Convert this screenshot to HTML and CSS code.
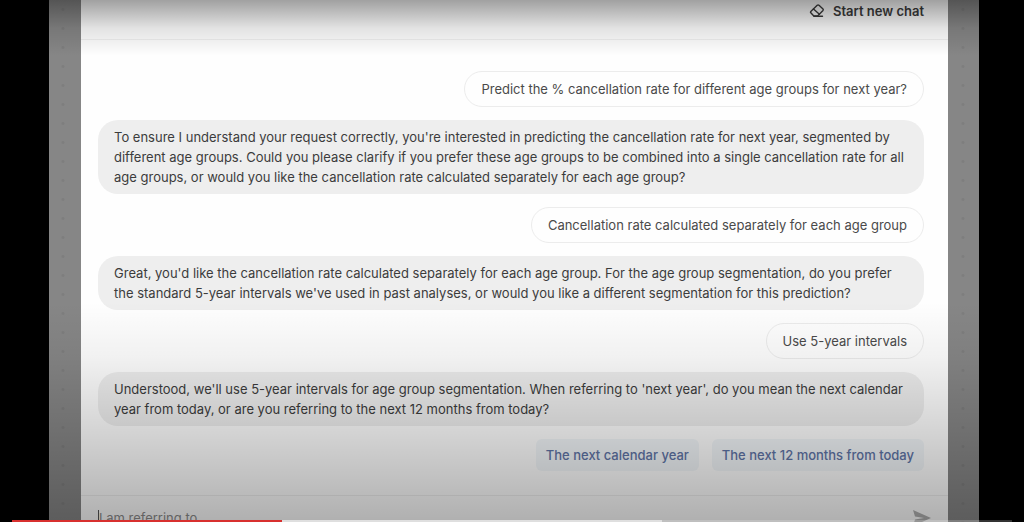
FILE: index.html
```html
<!DOCTYPE html>
<html lang="en">
<head>
    <meta charset="UTF-8">
    <meta name="viewport" content="width=device-width, initial-scale=1.0">
    <title>Chat</title>
    <link rel="stylesheet" href="styles.css">
</head>
<body>
    <div class="player">
        <div class="backdrop">
            <main class="chat">
                <header class="chat-header">
                    <button class="new-chat" type="button">
                        <svg width="16" height="16" viewBox="0 0 16 16" fill="none" stroke="currentColor" stroke-width="1.4" stroke-linejoin="round" stroke-linecap="round">
                            <path d="M8.2 2.3 L1.8 8.4 Q1.1 9.1 1.8 9.8 L4.8 13 H8.6 L14 7.4 Q14.6 6.7 14 6 L10 2.3 Q9.1 1.6 8.2 2.3 Z"/>
                            <path d="M4.5 6 L10.4 11.2 M5 13.3 H13.5"/>
                        </svg>
                        Start new chat
                    </button>
                </header>

                <div class="messages">
                    <p class="message user">Predict the % cancellation rate for different age groups for next year?</p>
                    <p class="message bot">To ensure I understand your request correctly, you're interested in predicting the cancellation rate for next year, segmented by different age groups. Could you please clarify if you prefer these age groups to be combined into a single cancellation rate for all age groups, or would you like the cancellation rate calculated separately for each age group?</p>
                    <p class="message user">Cancellation rate calculated separately for each age group</p>
                    <p class="message bot">Great, you'd like the cancellation rate calculated separately for each age group. For the age group segmentation, do you prefer the standard 5-year intervals we've used in past analyses, or would you like a different segmentation for this prediction?</p>
                    <p class="message user">Use 5-year intervals</p>
                    <p class="message bot">Understood, we'll use 5-year intervals for age group segmentation. When referring to 'next year', do you mean the next calendar year from today, or are you referring to the next 12 months from today?</p>
                    <div class="suggestions">
                        <button type="button">The next calendar year</button>
                        <button type="button">The next 12 months from today</button>
                    </div>
                </div>

                <form class="composer">
                    <input type="text" aria-label="Message" placeholder="I am referring to">
                    <button type="button" aria-label="Send">
                        <svg width="18" height="16" viewBox="0 0 18 16" fill="currentColor">
                            <path d="M0 0 L18 8 L0 16 L2 9.5 L11 8 L2 6.5 Z"/>
                        </svg>
                    </button>
                </form>
            </main>
        </div>
        <div class="shade shade-top"></div>
        <div class="shade shade-bottom"></div>
        <div class="progress">
            <div class="played"></div>
            <div class="loaded"></div>
        </div>
    </div>
</body>
</html>
```

FILE: styles.css
```css
* {
    box-sizing: border-box;
}

body {
    margin: 0;
    background: #000;
    color: #3c3c3c;
    font-family: Inter, "Liberation Sans", sans-serif;
    font-size: 13px;
    line-height: 20px;
}

button, input {
    font: inherit;
    border: none;
    background: none;
    padding: 0;
}

button {
    cursor: pointer;
}

.player {
    position: relative;
    height: 100vh;
    overflow: hidden;
}

.backdrop {
    min-height: 100%;
    margin: 0 45px 0 49px;
    padding: 0 31px 0 32px;
    background: radial-gradient(circle, #7e7e7e 1px, transparent 2px) 4px 0 / 20px 19px #868686;
}

.chat {
    background: #fefefe;
}

.chat-header {
    display: flex;
    justify-content: flex-end;
    height: 40px;
    padding: 0 24px;
    border-bottom: 1px solid #f0f0f0;
}

.new-chat {
    display: flex;
    align-items: center;
    gap: 8px;
    height: 21px;
    color: #3c3c3c;
    font-weight: 600;
}

.messages {
    display: flex;
    flex-direction: column;
    align-items: flex-start;
    gap: 13px;
    padding: 31px 24px 24px 17px;
}

.message {
    margin: 0;
    padding: 7px 16px;
    border-radius: 20px;
}

.bot {
    width: 100%;
    background: #eeeeee;
}

.user {
    align-self: flex-end;
    border: 1px solid #ececec;
    color: #4a4a4a;
}

.suggestions {
    display: flex;
    align-self: flex-end;
    gap: 13px;
}

.suggestions button {
    padding: 6px 10px;
    border-radius: 6px;
    background: #f2f6f9;
    color: #5f74a6;
    font-weight: 500;
}

.composer {
    display: flex;
    justify-content: space-between;
    padding: 14px 17px;
    border-top: 1px solid #efefef;
}

.composer input {
    flex: 1;
    height: 16px;
    border-left: 1px solid #555;
}

.composer input::placeholder {
    color: #8c8c8c;
    opacity: 1;
}

.composer button {
    height: 16px;
    line-height: 16px;
    color: #b0b0b0;
}

.composer svg {
    display: block;
}

/* video controls fade */
.shade {
    position: absolute;
    left: 0;
    right: 0;
    pointer-events: none;
}

.shade-top {
    top: 0;
    height: 56px;
    background: linear-gradient(rgba(0, 0, 0, 0.37), rgba(0, 0, 0, 0.11) 50%, transparent);
}

.shade-bottom {
    bottom: 0;
    height: 220px;
    background: linear-gradient(transparent, rgba(0, 0, 0, 0.05) 25%, rgba(0, 0, 0, 0.31));
}

.progress {
    position: absolute;
    left: 12px;
    right: 12px;
    bottom: 0;
    display: flex;
    height: 2px;
    background: rgba(255, 255, 255, 0.2);
}

.played {
    width: 27%;
    background: #d8302f;
}

.loaded {
    width: 38%;
    background: rgba(255, 255, 255, 0.5);
}
```
